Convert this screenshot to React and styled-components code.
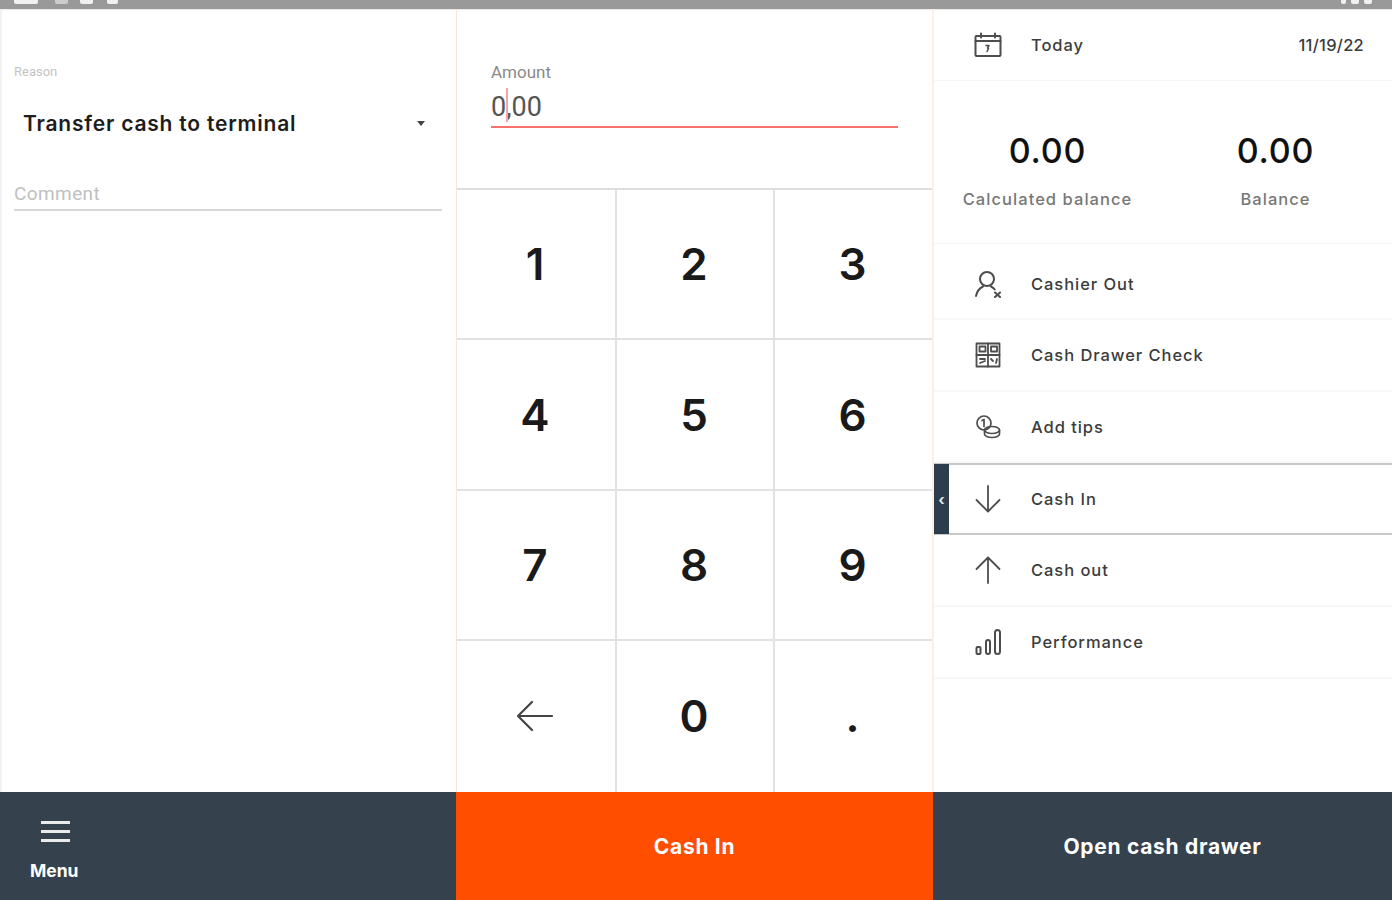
import React from 'react';
import styled, { createGlobalStyle } from 'styled-components';

const GlobalStyle = createGlobalStyle`
    html, body {
        margin: 0;
        padding: 0;
        background: #ffffff;
    }
    body {
        font-family: "Inter", "Liberation Sans", sans-serif;
        color: #222;
    }
`;

const Page = styled.div`
    width: 1392px;
    height: 900px;
    display: flex;
    flex-direction: column;
    overflow: hidden;
`;

const StatusBar = styled.div`
    height: 9px;
    flex: none;
    display: flex;
    align-items: flex-start;
    justify-content: space-between;
    padding: 0 20px 0 14px;
    background: #999999;
    box-shadow: 0 1px 1px rgba(0, 0, 0, 0.08);
`;

const StatusGroup = styled.div`
    display: flex;
`;

const StatusDot = styled.div`
    width: ${props => props.w}px;
    height: 4px;
    margin-left: ${props => props.ml || 0}px;
    border-radius: 0 0 2px 2px;
    background: rgba(255, 255, 255, ${props => props.alpha || 0.85});
`;

const Body = styled.div`
    height: 783px;
    flex: none;
    display: flex;
`;

const LeftColumn = styled.div`
    width: 457px;
    flex: none;
    box-sizing: border-box;
    padding: 56px 14px 0 12px;
    border-right: 1px solid #fbe3da;
    border-left: 2px solid #f1f1f1;
`;

const SmallLabel = styled.div`
    font-family: "Roboto", sans-serif;
    font-size: 13px;
    line-height: 14px;
    color: #c4c4c4;
`;

const SelectRow = styled.div`
    display: flex;
    align-items: center;
    justify-content: space-between;
    height: 28px;
    margin-top: 30px;
    padding: 0 17px 0 9px;
`;

const SelectText = styled.div`
    font-size: 21px;
    font-weight: 600;
    letter-spacing: 0.8px;
    color: #1d1d1d;
`;

const Caret = styled.div`
    width: 0;
    height: 0;
    border-left: 4px solid transparent;
    border-right: 4px solid transparent;
    border-top: 5px solid #444;
`;

const CommentField = styled.div`
    margin-top: 42px;
    height: 32px;
    box-sizing: border-box;
    border-bottom: 2px solid #d6d6d6;
    font-family: "Roboto", sans-serif;
    font-size: 19px;
    line-height: 30px;
    letter-spacing: 0.4px;
    color: #c0c0c0;
`;

const MiddleColumn = styled.div`
    width: 477px;
    flex: none;
    display: flex;
    flex-direction: column;
    box-sizing: border-box;
    border-right: 2px solid #fdeee8;
`;

const AmountArea = styled.div`
    height: 181px;
    flex: none;
    box-sizing: border-box;
    padding: 54px 34px 0 34px;
    border-bottom: 2px solid #dedede;
`;

const AmountLabel = styled.div`
    font-family: "Roboto", sans-serif;
    font-size: 17px;
    line-height: 18px;
    color: #8a8a8a;
`;

const AmountField = styled.div`
    position: relative;
    height: 46px;
    margin-top: 1px;
    padding-top: 8px;
    box-sizing: border-box;
    border-bottom: 2px solid #f8716a;
    font-family: "Roboto", sans-serif;
    font-size: 27px;
    line-height: 35px;
    color: #555;
`;

const TextCursor = styled.div`
    position: absolute;
    left: 15px;
    top: 6px;
    width: 2px;
    height: 34px;
    background: #f8a5a0;
`;

const Keypad = styled.div`
    flex: 1;
    display: grid;
    grid-template-columns: 160px 158px 1fr;
    grid-template-rows: 150px 151px 150px 1fr;
`;

const Key = styled.div`
    display: flex;
    align-items: center;
    justify-content: center;
    box-sizing: border-box;
    padding-right: 2px;
    padding-bottom: ${props => props.bottom ? 2 : 0}px;
    border-right: ${props => props.last ? 'none' : '2px solid #e2e2e2'};
    border-bottom: ${props => props.bottom ? 'none' : '2px solid #e2e2e2'};
    font-size: 44px;
    font-weight: 600;
    color: #1a1a1a;
`;

const RightColumn = styled.div`
    flex: 1;
    display: flex;
    flex-direction: column;
`;

const TodayRow = styled.div`
    height: 72px;
    flex: none;
    display: flex;
    align-items: center;
    box-sizing: border-box;
    padding: 0 28px 0 39px;
    border-bottom: 1px solid #f6f6f6;
`;

const IconSlot = styled.div`
    width: 30px;
    height: 30px;
    flex: none;
    margin-right: 28px;
    display: flex;
    align-items: center;
    justify-content: center;
    color: #4d4d4d;
`;

const RowText = styled.div`
    font-size: 16.5px;
    font-weight: 500;
    letter-spacing: 0.95px;
    color: #3c3c3c;
`;

const DateText = styled(RowText)`
    margin-left: auto;
    letter-spacing: 0.25px;
`;

const Balances = styled.div`
    height: 163px;
    flex: none;
    display: flex;
    box-sizing: border-box;
    border-bottom: 1px solid #f4f4f4;
`;

const BalanceCell = styled.div`
    width: ${props => props.width}px;
    flex: none;
    display: flex;
    flex-direction: column;
    align-items: center;
    padding-top: 50px;
`;

const BalanceValue = styled.div`
    font-size: 34px;
    line-height: 40px;
    font-weight: 500;
    letter-spacing: 0.8px;
    color: #111;
`;

const BalanceLabel = styled.div`
    margin-top: 18px;
    font-size: 16.5px;
    line-height: 20px;
    font-weight: 500;
    letter-spacing: 1.05px;
    color: #777;
    white-space: nowrap;
`;

const MenuRow = styled.div`
    position: relative;
    height: ${props => props.height || 72}px;
    flex: none;
    display: flex;
    align-items: center;
    box-sizing: border-box;
    padding-left: 39px;
    padding-top: ${props => props.pushDown || 0}px;
    border-top: ${props => props.active ? '2px solid #c8c8c8' : 'none'};
    border-bottom: ${props => props.active ? '2px solid #c8c8c8' : '2px solid #f8f8f8'};
`;

const ActiveTab = styled.div`
    position: absolute;
    left: 0;
    top: -1px;
    bottom: -1px;
    width: 15px;
    display: flex;
    align-items: center;
    justify-content: center;
    background: #2c3e4d;
    color: #dfe4e8;
    font-size: 15px;
    font-weight: 700;
`;

const Footer = styled.div`
    height: 108px;
    flex: none;
    display: flex;
`;

const MenuButton = styled.div`
    width: 456px;
    flex: none;
    box-sizing: border-box;
    padding: 29px 0 0 30px;
    background: #35414c;
`;

const MenuBars = styled.div`
    width: 29px;
    margin-left: 11px;
    display: flex;
    flex-direction: column;
    gap: 6px;
`;

const MenuBar = styled.div`
    height: 3px;
    background: #e8eaec;
`;

const MenuLabel = styled.div`
    margin-top: 19px;
    font-size: 17.5px;
    line-height: 20px;
    font-weight: 700;
    color: #ffffff;
`;

const FooterAction = styled.div`
    display: flex;
    align-items: center;
    justify-content: center;
    flex: ${props => props.grow ? 1 : 'none'};
    width: ${props => props.grow ? 'auto' : '477px'};
    background: ${props => props.color};
    color: #ffffff;
    font-size: 21px;
    font-weight: 700;
    letter-spacing: 0.7px;
`;

const iconProps = {
    fill: 'none',
    stroke: 'currentColor',
    strokeWidth: 2,
    strokeLinecap: 'round',
    strokeLinejoin: 'round',
};

const CalendarIcon = () => (
    <svg width="28" height="26" viewBox="0 0 28 26" {...iconProps}>
        <rect x="1.5" y="4" width="25" height="20" rx="1" />
        <path d="M1.5 9h25M7 1.5v4M21 1.5v4" />
        <path d="M12 13.5h3l-1.5 2.5 1 .5-1.5 3" strokeWidth="1.5" />
    </svg>
);

const CashierIcon = () => (
    <svg width="28" height="28" viewBox="0 0 28 28" {...iconProps}>
        <circle cx="13" cy="9" r="7" />
        <path d="M2 26c1-5 4-8 7-9.5M17 16.5c1.5.7 2.8 1.7 3.8 3" />
        <path d="M21 22.5l5 4.5M26 22.5l-5 4.5" />
    </svg>
);

const DrawerIcon = () => (
    <svg width="26" height="26" viewBox="0 0 26 26" {...iconProps} strokeWidth="1.8">
        <rect x="1.5" y="1.5" width="23" height="23" />
        <path d="M13 1.5v23M1.5 13h23" />
        <rect x="4.5" y="4.5" width="6" height="5" />
        <rect x="16" y="4.5" width="6" height="5" />
        <path d="M5 17h5M5 21l5-2M16 17l2 2M21 21l1-4" />
    </svg>
);

const TipsIcon = () => (
    <svg width="26" height="26" viewBox="0 0 26 26" {...iconProps} strokeWidth="1.7">
        <circle cx="9" cy="9" r="7" />
        <path d="M7 6.5l2-1v7" />
        <ellipse cx="17" cy="16" rx="7.5" ry="3.5" />
        <path d="M9.5 16v4c0 2 3.4 3.5 7.5 3.5s7.5-1.5 7.5-3.5v-4" />
    </svg>
);

const ArrowDownIcon = () => (
    <svg width="26" height="28" viewBox="0 0 26 28" {...iconProps} strokeWidth="1.8">
        <path d="M13 1v25M1.5 15L13 26.5 24.5 15" />
    </svg>
);

const ArrowUpIcon = () => (
    <svg width="26" height="28" viewBox="0 0 26 28" {...iconProps} strokeWidth="1.8">
        <path d="M13 27V2M1.5 13L13 1.5 24.5 13" />
    </svg>
);

const ChartIcon = () => (
    <svg width="26" height="28" viewBox="0 0 26 28" {...iconProps}>
        <rect x="1.5" y="19" width="4" height="7" rx="1" />
        <rect x="11" y="12" width="4" height="14" rx="2" />
        <rect x="20" y="2" width="5" height="24" rx="2.5" />
    </svg>
);

const BackArrowIcon = () => (
    <svg width="38" height="32" viewBox="0 0 38 32" fill="none" stroke="#444" strokeWidth="2.2" strokeLinecap="round" strokeLinejoin="round">
        <path d="M36 16H2M16 2L2 16l14 14" />
    </svg>
);

const keys = ['1', '2', '3', '4', '5', '6', '7', '8', '9'];

const menuItems = [
    { label: 'Cashier Out', icon: <CashierIcon />, height: 76, pushDown: 6 },
    { label: 'Cash Drawer Check', icon: <DrawerIcon /> },
    { label: 'Add tips', icon: <TipsIcon />, height: 71 },
    { label: 'Cash In', icon: <ArrowDownIcon />, active: true },
    { label: 'Cash out', icon: <ArrowUpIcon /> },
    { label: 'Performance', icon: <ChartIcon /> },
];

export default function App() {
    return (
        <Page>
            <GlobalStyle />
            <StatusBar>
                <StatusGroup>
                    <StatusDot w={24} />
                    <StatusDot w={13} ml={17} alpha={0.5} />
                    <StatusDot w={13} ml={12} />
                    <StatusDot w={11} ml={14} />
                </StatusGroup>
                <StatusGroup>
                    <StatusDot w={5} />
                    <StatusDot w={8} ml={5} />
                    <StatusDot w={8} ml={5} />
                </StatusGroup>
            </StatusBar>
            <Body>
                <LeftColumn>
                    <SmallLabel>Reason</SmallLabel>
                    <SelectRow>
                        <SelectText>Transfer cash to terminal</SelectText>
                        <Caret />
                    </SelectRow>
                    <CommentField>Comment</CommentField>
                </LeftColumn>
                <MiddleColumn>
                    <AmountArea>
                        <AmountLabel>Amount</AmountLabel>
                        <AmountField>
                            0,00
                            <TextCursor />
                        </AmountField>
                    </AmountArea>
                    <Keypad>
                        {keys.map((key, index) => (
                            <Key key={key} last={index % 3 === 2}>{key}</Key>
                        ))}
                        <Key bottom><BackArrowIcon /></Key>
                        <Key bottom>0</Key>
                        <Key bottom last>.</Key>
                    </Keypad>
                </MiddleColumn>
                <RightColumn>
                    <TodayRow>
                        <IconSlot><CalendarIcon /></IconSlot>
                        <RowText>Today</RowText>
                        <DateText>11/19/22</DateText>
                    </TodayRow>
                    <Balances>
                        <BalanceCell width={227}>
                            <BalanceValue>0.00</BalanceValue>
                            <BalanceLabel>Calculated balance</BalanceLabel>
                        </BalanceCell>
                        <BalanceCell width={229}>
                            <BalanceValue>0.00</BalanceValue>
                            <BalanceLabel>Balance</BalanceLabel>
                        </BalanceCell>
                    </Balances>
                    {menuItems.map(item => (
                        <MenuRow key={item.label} active={item.active} height={item.height} pushDown={item.pushDown}>
                            {item.active && <ActiveTab>‹</ActiveTab>}
                            <IconSlot>{item.icon}</IconSlot>
                            <RowText>{item.label}</RowText>
                        </MenuRow>
                    ))}
                </RightColumn>
            </Body>
            <Footer>
                <MenuButton>
                    <MenuBars>
                        <MenuBar />
                        <MenuBar />
                        <MenuBar />
                    </MenuBars>
                    <MenuLabel>Menu</MenuLabel>
                </MenuButton>
                <FooterAction color="#ff4e00">Cash In</FooterAction>
                <FooterAction color="#35414c" grow>Open cash drawer</FooterAction>
            </Footer>
        </Page>
    );
}
